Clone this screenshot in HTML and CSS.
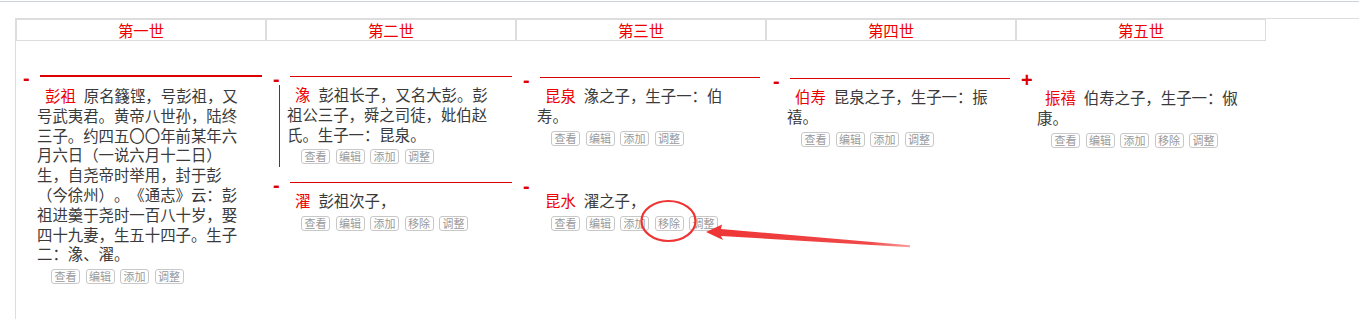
FILE: index.html
```html
<!DOCTYPE html>
<html lang="zh-CN">
<head>
    <meta charset="UTF-8">
    <title>世系图</title>
    <link rel="stylesheet" href="styles.css">
</head>
<body>
    <div class="topline"></div>
    <div class="frame">
        <table class="gens">
            <tr>
                <td>第一世</td>
                <td>第二世</td>
                <td>第三世</td>
                <td>第四世</td>
                <td>第五世</td>
            </tr>
        </table>

        <div class="tree">
            <div class="node">
                <div class="self">
                    <div class="cap root"><span class="toggle">-</span><span class="rule"></span></div>
                    <div class="body">
                        <div class="text"><span class="name">彭祖</span>原名籛铿，号彭祖，又号武夷君。黄帝八世孙，陆终三子。约四五〇〇年前某年六月六日（一说六月十二日）生，自尧帝时举用，封于彭（今徐州）。《通志》云：彭祖进羹于尧时一百八十岁，娶四十九妻，生五十四子。生子二：潒、濯。</div>
                        <div class="ops"><button>查看</button><button>编辑</button><button>添加</button><button>调整</button></div>
                    </div>
                </div>
                <div class="children">
                    <div class="node">
                        <div class="self">
                            <div class="cap"><span class="toggle">-</span><span class="rule"></span></div>
                            <div class="body linked">
                                <div class="text"><span class="name">潒</span>彭祖长子，又名大彭。彭祖公三子，舜之司徒，妣伯赵氏。生子一：昆泉。</div>
                                <div class="ops"><button>查看</button><button>编辑</button><button>添加</button><button>调整</button></div>
                            </div>
                        </div>
                        <div class="children">
                            <div class="node">
                                <div class="self">
                                    <div class="cap"><span class="toggle">-</span><span class="rule short"></span></div>
                                    <div class="body">
                                        <div class="text"><span class="name">昆泉</span>潒之子，生子一：伯寿。</div>
                                        <div class="ops"><button>查看</button><button>编辑</button><button>添加</button><button>调整</button></div>
                                    </div>
                                </div>
                                <div class="children">
                                    <div class="node">
                                        <div class="self">
                                            <div class="cap"><span class="toggle">-</span><span class="rule short"></span></div>
                                            <div class="body">
                                                <div class="text"><span class="name">伯寿</span>昆泉之子，生子一：振禧。</div>
                                                <div class="ops"><button>查看</button><button>编辑</button><button>添加</button><button>调整</button></div>
                                            </div>
                                        </div>
                                        <div class="children">
                                            <div class="node">
                                                <div class="self">
                                                    <div class="cap"><span class="toggle plus">+</span><span class="rule none"></span></div>
                                                    <div class="body">
                                                        <div class="text"><span class="name">振禧</span>伯寿之子，生子一：俶康。</div>
                                                        <div class="ops"><button>查看</button><button>编辑</button><button>添加</button><button>移除</button><button>调整</button></div>
                                                    </div>
                                                </div>
                                            </div>
                                        </div>
                                    </div>
                                </div>
                            </div>
                        </div>
                    </div>

                    <div class="node">
                        <div class="self">
                            <div class="cap"><span class="toggle">-</span><span class="rule"></span></div>
                            <div class="body">
                                <div class="text"><span class="name">濯</span>彭祖次子，</div>
                                <div class="ops"><button>查看</button><button>编辑</button><button>添加</button><button>移除</button><button>调整</button></div>
                            </div>
                        </div>
                        <div class="children">
                            <div class="node">
                                <div class="self">
                                    <div class="cap bare"><span class="toggle">-</span></div>
                                    <div class="body">
                                        <div class="text"><span class="name">昆水</span>濯之子，</div>
                                        <div class="ops"><button>查看</button><button>编辑</button><button>添加</button><button>移除</button><button>调整</button></div>
                                    </div>
                                </div>
                            </div>
                        </div>
                    </div>
                </div>
            </div>
        </div>
    </div>

    <!-- annotation drawn over the screenshot -->
    <svg class="marks" width="1359" height="319" viewBox="0 0 1359 319">
        <defs>
            <linearGradient id="fade" x1="706" y1="0" x2="910" y2="0" gradientUnits="userSpaceOnUse">
                <stop offset="0" stop-color="#ee3535"/>
                <stop offset="0.8" stop-color="#f04848"/>
                <stop offset="1" stop-color="#f7a0a0"/>
            </linearGradient>
        </defs>
        <ellipse cx="668.5" cy="221" rx="27" ry="20" fill="none" stroke="#ee3535" stroke-width="2.2"/>
        <polygon points="706,232 722,224.5 721,229 910,245.2 910,247.2 721,236 723,240" fill="url(#fade)"/>
    </svg>
</body>
</html>
```

FILE: styles.css
```css
html, body {
    margin: 0;
    overflow: hidden;
}

body {
    position: relative;
    font-family: "Noto Sans CJK SC", sans-serif;
    color: #3a3a3a;
    background: #fff;
    text-spacing-trim: space-all;
}

.topline {
    height: 1px;
    border-bottom: 1px solid #ccd3da;
}

.frame {
    margin: 16px 0 0 15px;
    border-top: 1px solid #ddd;
    border-left: 1px solid #ddd;
    height: calc(100vh - 19px);
}

/* generation header */
.gens {
    border-collapse: separate;
    border-spacing: 0;
}

.gens td {
    width: 248px;
    height: 20px;
    padding: 0;
    border: 1px solid #ddd;
    text-align: center;
    color: #e00;
    font-size: 15.4px;
    line-height: 20px;
}

/* tree */
.tree {
    margin-top: 34px;
}

.node {
    display: flex;
    align-items: flex-start;
}

.node + .node {
    margin-top: 15px;
}

.self {
    width: 250px;
    flex: none;
}

.children {
    padding-top: 1px;
}

.cap {
    display: flex;
    height: 9px;
}

.cap.root {
    height: 11px;
}

.cap.bare {
    height: 8px;
}

.toggle {
    display: block;
    width: 24px;
    box-sizing: border-box;
    padding-left: 7px;
    font: bold 20px/6px "Liberation Sans", sans-serif;
    color: #d00;
}

.toggle.plus {
    padding-left: 5px;
    line-height: 3px;
}

.rule {
    width: 222px;
    height: 0;
    border-top: 1px solid #d00;
}

.cap.root .rule {
    border-top-width: 2px;
}

.rule.short {
    width: 220px;
}

.rule.none {
    border-top-color: transparent;
}

.body {
    margin-left: 13px;
    padding: 0 0 3px 8px;
}

.body.linked {
    border-left: 1px solid #d00;
    padding-left: 7px;
}

.text {
    width: 208px;
    font-size: 15.4px;
    line-height: 19.8px;
}

.name {
    color: #e00;
    margin: 0 8px;
}

.ops {
    display: flex;
    gap: 5.5px;
    margin: 5px 0 0 14px;
}

.ops button {
    width: 29px;
    height: 15px;
    padding: 0;
    border: 1px solid #c8c8c8;
    border-radius: 3px;
    background: #fff;
    color: #999;
    font: 11px/13px "Noto Sans CJK SC", sans-serif;
}

.marks {
    position: absolute;
    top: 0;
    left: 0;
    pointer-events: none;
}
```
